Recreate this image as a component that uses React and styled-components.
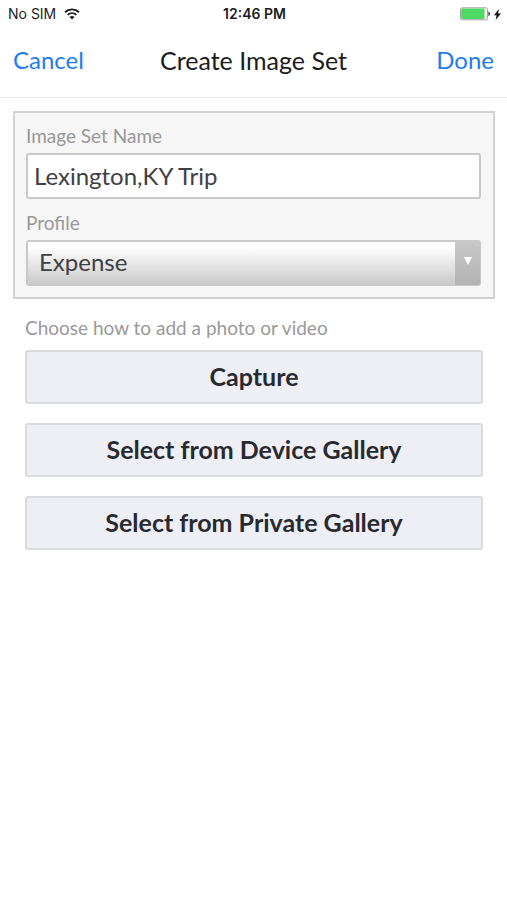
import React, { useState } from "react";
import styled, { createGlobalStyle, css } from "styled-components";

const GlobalStyle = createGlobalStyle`
  *, *::before, *::after {
    box-sizing: border-box;
  }

  body {
    margin: 0;
    background: #fff;
    color: #1c1c1e;
    font-family: Lato, "Open Sans", sans-serif;
  }

  button, input, select {
    font-family: inherit;
  }
`;

const StatusBar = styled.div`
  display: grid;
  grid-template-columns: 1fr auto 1fr;
  align-items: center;
  height: 28px;
  padding: 0 6px 0 8px;
  font-family: Inter, sans-serif;
  font-size: 14px;
  line-height: 20px;
`;

const StatusGroup = styled.div`
  display: flex;
  align-items: center;
  gap: ${props => (props.$end ? "3px" : "8px")};
  justify-content: ${props => (props.$end ? "flex-end" : "flex-start")};
`;

const Clock = styled.time`
  font-weight: 600;
`;

const NavBar = styled.header`
  display: grid;
  grid-template-columns: 1fr auto 1fr;
  align-items: center;
  height: 70px;
  padding: 0 13px 6px;
  border-bottom: 1px solid #e8e8e8;
`;

const Title = styled.h1`
  margin: 0;
  font-size: 25px;
  font-weight: 400;
  line-height: 28px;
`;

const NavButton = styled.button`
  justify-self: ${props => (props.$end ? "end" : "start")};
  padding: 0;
  border: 0;
  background: none;
  color: #1f7cf0;
  font-size: 24px;
  line-height: 28px;
  cursor: pointer;
`;

const Content = styled.main`
  padding: 13px 12px 20px 13px;
`;

const Panel = styled.div`
  padding: 12px 12px 11px 11px;
  border: 2px solid #d2d2d2;
  background: #f6f6f6;
`;

const hint = css`
  color: #999;
  font-size: 19px;
  line-height: 22px;
`;

const Label = styled.label`
  ${hint}
  display: block;
  margin-bottom: 6px;
`;

const field = css`
  display: block;
  width: 100%;
  height: 46px;
  border: 2px solid #c9c9c9;
  border-radius: 3px;
  color: #3f4044;
  font-size: 24px;
  line-height: 28px;
`;

const TextInput = styled.input`
  ${field}
  margin-bottom: 13px;
  padding: 0 6px 2px;
  background: #fff;
`;

const SelectWrap = styled.div`
  position: relative;
`;

const Select = styled.select`
  ${field}
  appearance: none;
  padding: 0 32px 2px 11px;
  background: linear-gradient(#fff 12%, #cacaca);
`;

const SelectArrow = styled.span`
  position: absolute;
  top: 1px;
  right: 1px;
  bottom: 1px;
  display: flex;
  align-items: center;
  justify-content: center;
  width: 25px;
  padding-bottom: 4px;
  border-radius: 0 2px 2px 0;
  background: linear-gradient(#c9c9c9, #b2b2b2);
  pointer-events: none;
`;

const Actions = styled.section`
  display: flex;
  flex-direction: column;
  gap: 19px;
  padding: 18px 12px 0;
`;

const Prompt = styled.p`
  ${hint}
  margin: 0 0 -8px;
`;

const ActionButton = styled.button`
  height: 54px;
  padding: 0 6px 2px;
  border: 2px solid #dadbdf;
  border-radius: 3px;
  background: #eeeff5;
  color: #282a30;
  font-size: 25px;
  font-weight: 700;
  line-height: 28px;
  cursor: pointer;
`;

const WifiIcon = () => (
  <svg width="16" height="12" viewBox="0 0 16 12" fill="none" aria-hidden="true">
    <path d="M1 4.2C5 .4 11 .4 15 4.2" stroke="#1c1c1e" strokeWidth="1.9" />
    <path d="M3.6 6.9C6.2 4.5 9.8 4.5 12.4 6.9" stroke="#1c1c1e" strokeWidth="1.8" />
    <path d="M5.5 9C7 7.7 9 7.7 10.5 9L8 11.6Z" fill="#1c1c1e" />
  </svg>
);

const BatteryIcon = () => (
  <svg width="31" height="14" viewBox="0 0 31 14" aria-hidden="true">
    <rect x=".5" y=".8" width="27" height="12" rx="1.8" fill="#fff" stroke="#a3a3a3" />
    <rect x="1.2" y="1.5" width="23.3" height="10.6" rx="1" fill="#4cd964" />
    <path d="M28.4 4.6c2 .3 2 4.1 0 4.4Z" fill="#333" />
  </svg>
);

const BoltIcon = () => (
  <svg width="7" height="11" viewBox="0 0 7 11" aria-hidden="true">
    <path d="M4.8 0 0 6.2h2.6L1.6 11 7 4.4H4.2Z" fill="#111" />
  </svg>
);

const TriangleIcon = () => (
  <svg width="8" height="8" viewBox="0 0 8 8" aria-hidden="true">
    <path d="M0 0h8L4 8Z" fill="#fff" />
  </svg>
);

const actions = ["Capture", "Select from Device Gallery", "Select from Private Gallery"];

export default function App() {
  const [name, setName] = useState("Lexington,KY Trip");
  const [profile, setProfile] = useState("Expense");

  return (
    <>
      <GlobalStyle />
      <StatusBar>
        <StatusGroup>
          No SIM
          <WifiIcon />
        </StatusGroup>
        <Clock>12:46 PM</Clock>
        <StatusGroup $end>
          <BatteryIcon />
          <BoltIcon />
        </StatusGroup>
      </StatusBar>
      <NavBar>
        <NavButton type="button">Cancel</NavButton>
        <Title>Create Image Set</Title>
        <NavButton type="button" $end>
          Done
        </NavButton>
      </NavBar>
      <Content>
        <Panel>
          <Label htmlFor="set-name">Image Set Name</Label>
          <TextInput
            id="set-name"
            type="text"
            value={name}
            onChange={e => setName(e.target.value)}
          />
          <Label htmlFor="profile">Profile</Label>
          <SelectWrap>
            <Select id="profile" value={profile} onChange={e => setProfile(e.target.value)}>
              <option>Expense</option>
            </Select>
            <SelectArrow>
              <TriangleIcon />
            </SelectArrow>
          </SelectWrap>
        </Panel>
        <Actions>
          <Prompt>Choose how to add a photo or video</Prompt>
          {actions.map(action => (
            <ActionButton key={action} type="button">
              {action}
            </ActionButton>
          ))}
        </Actions>
      </Content>
    </>
  );
}
